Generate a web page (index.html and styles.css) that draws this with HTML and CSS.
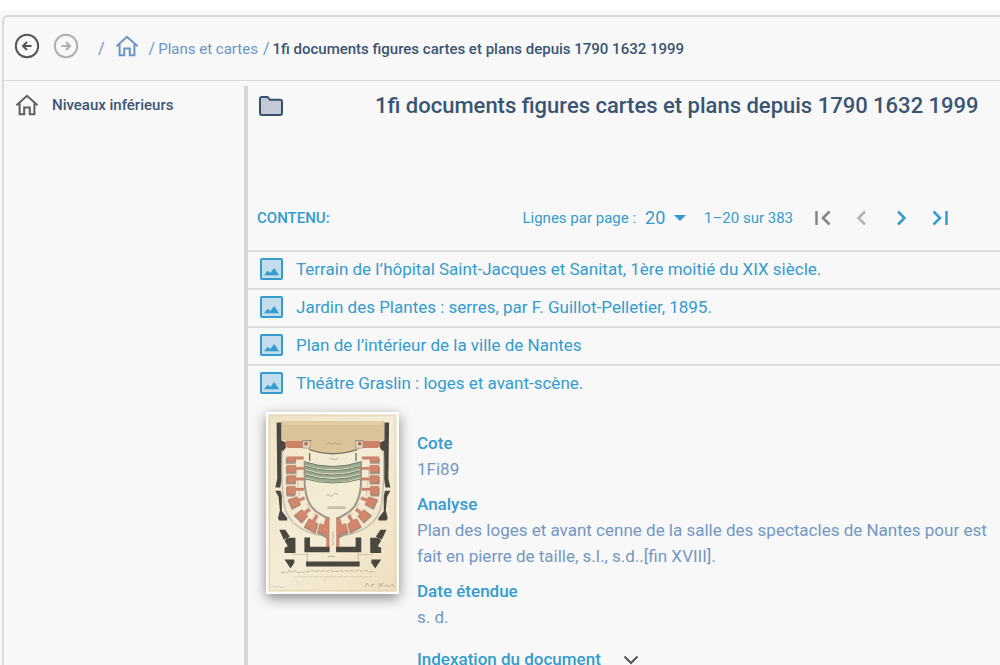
FILE: index.html
```html
<!DOCTYPE html>
<html lang="fr">
<head>
<meta charset="utf-8">
<meta name="viewport" content="width=device-width, initial-scale=1">
<title>1fi documents figures cartes et plans</title>
<link rel="stylesheet" href="styles.css">
</head>
<body>
<svg class="defs" aria-hidden="true">
  <symbol id="home" viewBox="0 0 24 22"><path d="M1.5 11.2 12 1.8l10.500 9.400M4.600 9.500v10.700h4.600v-6.600h5.600v6.600h4.600V9.500" fill="none" stroke="currentColor" stroke-width="2"/></symbol>
  <symbol id="image" viewBox="0 0 23 22"><rect x="1" y="1" width="21" height="20" rx="1" fill="#c3ddec" stroke="#349cce" stroke-width="2"/><path d="M4 17.300l3.700-4.600 2.600 2.300 3.800-5 5 7.300z" fill="#349cce"/></symbol>
</svg>
<div class="app">
  <header class="topbar">
    <button class="round" type="button" aria-label="Précédent"><svg viewBox="0 0 26 26" width="26" height="26"><circle cx="13" cy="13" r="11.200"/><path d="M17.500 13H9.500M13 9l-4 4 4 4"/></svg></button>
    <button class="round off" type="button" aria-label="Suivant" disabled><svg viewBox="0 0 26 26" width="26" height="26"><circle cx="13" cy="13" r="11.200"/><path d="M8.500 13h8M13 9l4 4-4 4"/></svg></button>
    <nav class="crumbs" aria-label="Fil d'Ariane">
      <span class="sep">/</span>
      <a class="crumb-home" href="#" aria-label="Accueil"><svg width="24" height="22"><use href="#home"/></svg></a>
      <span class="sep">/</span>
      <a class="crumb" href="#">Plans et cartes</a>
      <span class="sep">/</span>
      <strong>1fi documents figures cartes et plans depuis 1790 1632 1999</strong>
    </nav>
  </header>
  <div class="body">
    <aside class="side">
      <a class="level" href="#"><svg width="24" height="22"><use href="#home"/></svg><span>Niveaux inférieurs</span></a>
    </aside>
    <main class="content">
      <div class="heading">
        <svg class="folder" viewBox="0 0 26 22" width="26" height="22"><path d="M2 4q0-2 2-2h5.500l2.500 2.800H22q2 0 2 2V18q0 2-2 2H4q-2 0-2-2z" fill="#c4cad3" stroke="#35506e" stroke-width="2"/></svg>
        <h1>1fi documents figures cartes et plans depuis 1790 1632 1999</h1>
      </div>
      <div class="toolbar">
        <h2>CONTENU:</h2>
        <div class="pager">
          <label for="rows">Lignes par page :</label>
          <span class="pick"><select id="rows"><option>20</option><option>50</option></select><svg viewBox="0 0 12 6" width="12" height="6"><path d="M0 0h12L6 6z" fill="currentColor"/></svg></span>
          <span class="range">1–20 sur 383</span>
          <div class="pages">
            <button class="page first" type="button" aria-label="Première page"><svg viewBox="0 0 20 18" width="20" height="18"><path d="M3.500 2v14M16.500 2.500 10 9l6.500 6.500"/></svg></button>
            <button class="page prev" type="button" aria-label="Page précédente"><svg viewBox="0 0 20 18" width="20" height="18"><path d="M13 2.500 6.500 9l6.500 6.500"/></svg></button>
            <button class="page" type="button" aria-label="Page suivante"><svg viewBox="0 0 20 18" width="20" height="18"><path d="M7 2.500 13.500 9 7 15.500"/></svg></button>
            <button class="page" type="button" aria-label="Dernière page"><svg viewBox="0 0 20 18" width="20" height="18"><path d="M3.500 2.500 10 9l-6.500 6.500M16.500 2v14"/></svg></button>
          </div>
        </div>
      </div>
      <ul class="list">
        <li><a class="row" href="#"><svg width="23" height="22"><use href="#image"/></svg><span>Terrain de l’hôpital Saint-Jacques et Sanitat, 1ère moitié du XIX siècle.</span></a></li>
        <li><a class="row" href="#"><svg width="23" height="22"><use href="#image"/></svg><span>Jardin des Plantes : serres, par F. Guillot-Pelletier, 1895.</span></a></li>
        <li><a class="row" href="#"><svg width="23" height="22"><use href="#image"/></svg><span>Plan de l’intérieur de la ville de Nantes</span></a></li>
        <li>
          <a class="row" href="#"><svg width="23" height="22"><use href="#image"/></svg><span>Théâtre Graslin : loges et avant-scène.</span></a>
          <article class="detail">
            <svg class="plan" viewBox="38 40 390 538" role="img" aria-label="Plan du théâtre Graslin">
              <defs>
                <linearGradient id="paper" x1="0" y1="0" x2="1" y2="1"><stop offset="0" stop-color="#efe3c7"/><stop offset=".5" stop-color="#f5ecd7"/><stop offset="1" stop-color="#eee0c0"/></linearGradient>
                <g id="half">
                  <path d="M64 66h14v54l14 6v16l-12 14v76l-5 30H60l6-26z" fill="#4b463f"/>
                  <path d="M60 272h16l4 14v48l16 20v8H72l-4-8 6-22-4-42z" fill="#4b463f"/>
                  <path d="M81 150q-4 110 8 175 20 64 105 82" fill="none" stroke="#c4bda9" stroke-width="4"/>
                  <path d="M92 121h52v22H98l-8-8z" fill="#cd8266"/>
                  <path d="M143 121h22v22h-22z" fill="#e6dfd0" stroke="#8f8477" stroke-width="2"/><circle cx="153" cy="130" r="6" fill="#c5694f"/>
                  <path d="M164 158v24" stroke="#776d61" stroke-width="4"/>
                  <path d="M149 182v72q5 67 45 87 15 11 30 15" fill="none" stroke="#9c9789" stroke-width="6"/>
                  <g fill="#9e998b"><path d="M92 174h30v16H92zM92 199h30v23H92zM92 230h30v23H92zM92 263h28v26H94zM97 301l30-10 9 25-26 14zM115 348l23-18 20 18-18 24zM146 384l14-26 30 15-8 30zM186 402l8-29 22 7v36z"/></g>
                  <g fill="#d2866b" stroke="#a5654f" stroke-width="1"><path d="M95 169h50v8h-24v8H95zM95 195h27v6h25v7h-25v8H95zM95 226h27v7h24v7h-24v8H95zM95 258h26v6h25v7h-25v13H95zM100 298l26-8 4 7 17-7 3 8-17 6 4 10-24 12zM119 345l22-16 5 7 14-12 7 8-14 10 6 7-17 19zM149 379l14-23 9 5 11-18 7 5-10 18 8 5-8 29zM188 397l7-26 12 4 5-19h11v98h-8v-50z"/></g>
                  <path d="M125 208v18M128 240v18M132 270v20M154 309l9 15M174 340l12 9" stroke="#b8a892" stroke-width="2"/>
                  <path d="M72 390h18l14 20-18 10zM88 422l9-8h24v46H88v-16l10-4zM148 413h17v28h59v17h-76zM88 480h29l1 9-12 18z" fill="#4b463f"/>
                  <path d="M113 465h44v20M157 459v28" fill="none" stroke="#c2b49b" stroke-width="2"/>
                </g>
              </defs>
              <path d="M38 40h390v538H38z" fill="url(#paper)"/>
              <path d="M43 45h379v528H43z" fill="none" stroke="#dfcfae" stroke-width="2"/>
              <path d="M78 62h311v58h-75v28q-81 24-155 0v-28H78z" fill="#d9c498"/>
              <path d="M84 65h300v8H84z" fill="#e0cda5"/>
              <path d="M144 120h26M303 120h22" stroke="#6c6250" stroke-width="2"/>
              <path d="M163 148q72 24 144 0" fill="none" stroke="#7e7464" stroke-width="4"/>
              <g fill="none" stroke="#9ea88e" stroke-width="9"><path d="M147 188q86 29 174 0M147 201q86 29 174 0M147 214q86 29 174 0M149 227q86 29 172 0"/></g>
              <g fill="none" stroke="#668163" stroke-width="3"><path d="M147 184q86 29 174 0M147 197q86 29 174 0M147 210q86 29 174 0M147 223q86 29 174 0M150 236q86 25 171 0"/></g>
              <use href="#half"/>
              <use href="#half" transform="translate(468 0) scale(-1 1)"/>
              <path d="M153 486h162v15H153z" fill="#4b463f"/>
              <g fill="none" stroke="#9a8c78" stroke-width="2"><path d="M216 131q5-6 10-2t10-1 9 2h16M224 176q6-4 10 0t16-1M214 288q5-10 9-2t11-2 16 1M218 321h54M218 325h54M232 438l4-8-4-8 4-8-3-9 3-10M218 472q10-5 22-1"/></g>
              <g fill="none" stroke="#a4957c" stroke-width="2"><path d="M77 519h10l5-3m4 4 5-9 5 8 5-4 6 3 4-6 6 7h9l3-4 8 5 8-4h13l4-5 5 5 12-2 9 3 8-4 11 3 9-4 8 4h16l6-5 8 5 10-3 7 3 14-3 7 4 11-6 8 5 14-3 8 4h18" stroke-dasharray="13 3"/><path d="M118 532h235" stroke-dasharray="7 2 3 3" opacity=".6"/><path d="M48 564l6-4 7 4 8-4 6 4h12" opacity=".5"/><path d="M331 562l6-11 6 10M352 563v-8h8M373 565l3-13 6 10 4-12M390 561l8-4 7 5 9-8 5 9"/></g>
              <path d="M110 543l15-3 5 16M143 544l12 12 10-15M210 540v14M200 540h22" fill="none" stroke="#e2d5bb" stroke-width="2"/>
            </svg>
            <dl class="meta">
              <div><dt>Cote</dt><dd>1Fi89</dd></div>
              <div><dt>Analyse</dt><dd>Plan des loges et avant cenne de la salle des spectacles de Nantes pour est<br>fait en pierre de taille, s.l., s.d..[fin XVIII].</dd></div>
              <div><dt>Date étendue</dt><dd>s. d.</dd></div>
              <div class="more"><dt><button class="expand" type="button">Indexation du document<svg viewBox="0 0 16 10" width="16" height="10"><path d="M1.500 1.500 8 8l6.500-6.500" fill="none" stroke="#555" stroke-width="2"/></svg></button></dt></div>
            </dl>
          </article>
        </li>
      </ul>
    </main>
  </div>
</div>
</body>
</html>
```
FILE: styles.css
```css
* { box-sizing: border-box; }
html { background: #fff; }
body {
  margin: 0;
  padding-top: 11px;
  height: 100vh;
  overflow: hidden;
  font-family: Roboto, "Liberation Sans", sans-serif;
  color: #3a5573;
}
h1, h2, ul, dl, dd { margin: 0; padding: 0; }
a { color: inherit; text-decoration: none; }
button { border: 0; padding: 0; background: none; font: inherit; color: inherit; }
svg { display: block; flex: none; }
.defs { position: absolute; width: 0; height: 0; }

.app {
  min-height: 100%;
  background: #f8f8f8;
  padding: 4px 0 0 2px;
  display: flex;
  flex-direction: column;
}
.topbar {
  height: 66px;
  display: flex;
  align-items: center;
  padding: 0 0 6px 10px;
  border: 2px solid #d9dada;
  border-width: 2px 0 1px 2px;
  border-radius: 6px 0 0 0;
}
.round { color: #555; }
.round + .round { margin-left: 13px; }
.round.off { color: #afafaf; }
.round svg { fill: none; stroke: currentColor; stroke-width: 2; }
.crumbs {
  display: flex;
  align-items: center;
  padding: 6px 0 0 19px;
  font-size: 15px;
  line-height: 20px;
  color: #6b95c4;
  white-space: nowrap;
}
.sep { font-size: 16px; }
.crumb-home { margin: 0 10px; padding-bottom: 6px; }
.crumb { margin: 0 5px 0 3px; }
.crumbs strong { margin-left: 3px; font-weight: 500; color: #3a5573; }

.body { flex: 1; display: flex; border-left: 2px solid #d9dada; }
.side { width: 240px; flex: none; padding: 13px 11px; }
.level {
  display: flex;
  align-items: center;
  gap: 13px;
  font-size: 15px;
  font-weight: 500;
}
.level svg { color: #606060; }

.content { flex: 1; min-width: 0; margin-top: 5px; border-left: 4px solid #d5d5d6; }
.heading { display: flex; align-items: center; padding: 6px 0 0 10px; }
.heading h1 {
  margin-left: 91px;
  font-size: 22px;
  line-height: 28px;
  font-weight: 500;
  white-space: nowrap;
}
.toolbar {
  display: flex;
  align-items: center;
  justify-content: space-between;
  height: 64px;
  margin-top: 66px;
  padding: 0 50px 0 9px;
  color: #349cce;
}
.toolbar h2 { font-size: 15px; font-weight: 500; }
.pager { display: flex; align-items: center; font-size: 15px; white-space: nowrap; }
.pick { display: flex; align-items: center; gap: 8px; margin-left: 9px; }
.pick select {
  appearance: none;
  border: 0;
  padding: 0;
  background: none;
  font: 18px/24px Roboto, "Liberation Sans", sans-serif;
  color: inherit;
}
.range { margin-left: 18px; }
.pages { display: flex; gap: 19px; margin-left: 20px; }
.page svg { fill: none; stroke: currentColor; stroke-width: 2.5; }
.page.first { color: #858585; }
.page.prev { color: #b4b4b4; }

.list { list-style: none; }
.list li { border-top: 2px solid #dfdfdf; }
.row {
  display: flex;
  align-items: center;
  gap: 13px;
  height: 36px;
  padding: 0 0 2px 12px;
  font-size: 17px;
  line-height: 24px;
  color: #349cce;
  white-space: nowrap;
}
.detail { display: flex; align-items: flex-start; padding: 10px 0 0 18px; }
.plan {
  width: 133px;
  height: 182px;
  border: 2px solid #fff;
  box-shadow: 0 4px 12px rgba(0, 0, 0, .45);
}
.meta { display: grid; gap: 10px; margin: 19px 0 0 18px; font-size: 17px; line-height: 26px; }
.meta dt { font-weight: 500; line-height: 25px; color: #349cce; }
.meta dd { color: #7397c3; white-space: nowrap; }
.more { padding-top: 7px; }
.expand { display: flex; align-items: center; gap: 22px; }
```
